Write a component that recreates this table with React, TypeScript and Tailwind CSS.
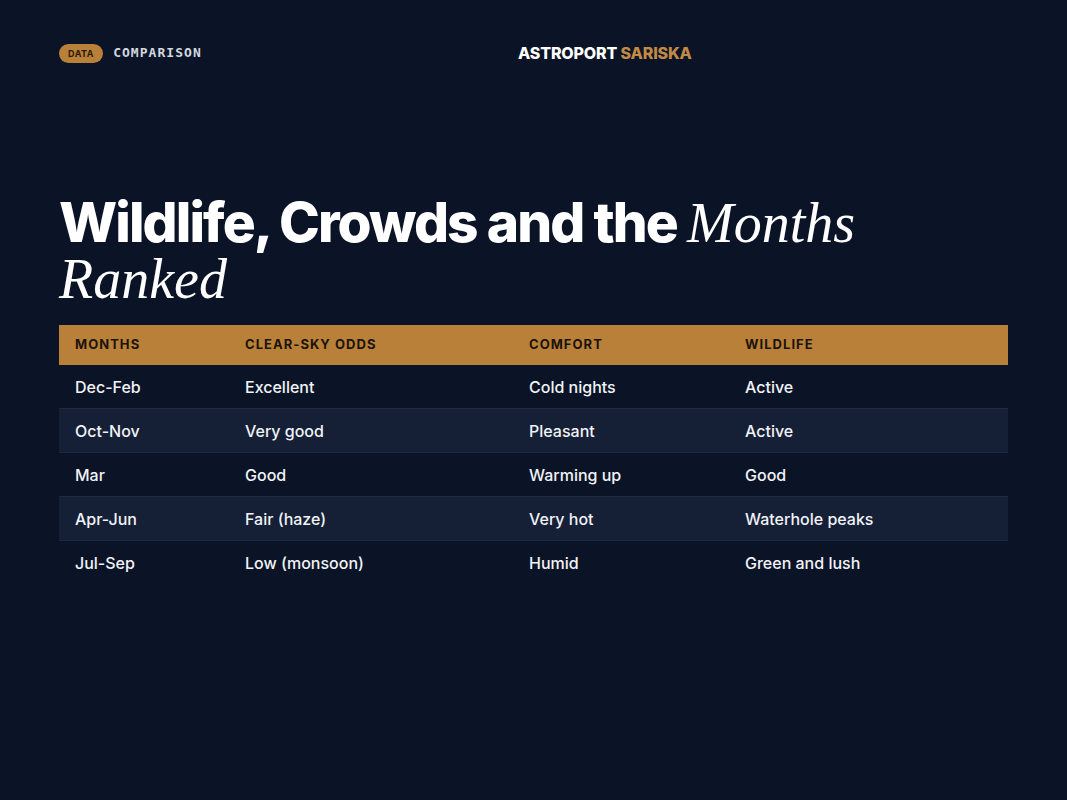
const rows = [
  ['Dec-Feb', 'Excellent', 'Cold nights', 'Active'],
  ['Oct-Nov', 'Very good', 'Pleasant', 'Active'],
  ['Mar', 'Good', 'Warming up', 'Good'],
  ['Apr-Jun', 'Fair (haze)', 'Very hot', 'Waterhole peaks'],
  ['Jul-Sep', 'Low (monsoon)', 'Humid', 'Green and lush'],
];

const cols = ['w-[170px]', 'w-[284px]', 'w-[216px]', 'flex-1'];

export default function App() {
  return (
    <div className="min-h-[800px] w-full bg-[#0b1326] px-[59px] pt-[41px] font-['Inter',sans-serif] text-white">
      {/* Top bar */}
      <div className="flex items-center justify-between">
        <div className="flex items-center gap-[10px]">
          <span className="rounded-full bg-[#b88038] px-[9px] py-[3px] text-[9px] font-bold leading-[13px] tracking-[0.06em] text-[#2a1a0a]">
            DATA
          </span>
          <span className="font-['DejaVu_Sans_Mono',monospace] text-[13px] font-bold tracking-[0.08em] text-[#d3d7df]">
            COMPARISON
          </span>
        </div>
        <div className="text-[16px] font-extrabold tracking-[-0.01em]">
          ASTROPORT <span className="text-[#c18a45]">SARISKA</span>
        </div>
        <div />
      </div>

      {/* Title */}
      <h1 className="mt-[130px] text-[55px] font-extrabold leading-[55px] tracking-[-0.035em]">
        Wildlife, Crowds and the{' '}
        <span className="font-['Liberation_Serif',serif] text-[56px] font-normal italic tracking-normal">
          Months Ranked
        </span>
      </h1>

      {/* Table */}
      <div className="mt-[18px] w-[949px]">
        <div className="flex h-[40px] items-center bg-[#b88038] pl-[16px] text-[13px] font-bold tracking-[0.08em] text-[#1c140c]">
          <div className={cols[0]}>MONTHS</div>
          <div className={cols[1]}>CLEAR-SKY ODDS</div>
          <div className={cols[2]}>COMFORT</div>
          <div className={cols[3]}>WILDLIFE</div>
        </div>
        {rows.map((r, i) => (
          <div
            key={r[0]}
            className={`flex h-[44px] items-center pl-[16px] text-[16px] font-medium text-[#f1f3f7] ${
              i < rows.length - 1 ? 'border-b border-[#1e2840]' : ''
            } ${i % 2 === 1 ? 'bg-[#151f35]' : ''}`}
          >
            {r.map((c, j) => (
              <div key={j} className={cols[j]}>
                {c}
              </div>
            ))}
          </div>
        ))}
      </div>
    </div>
  );
}
